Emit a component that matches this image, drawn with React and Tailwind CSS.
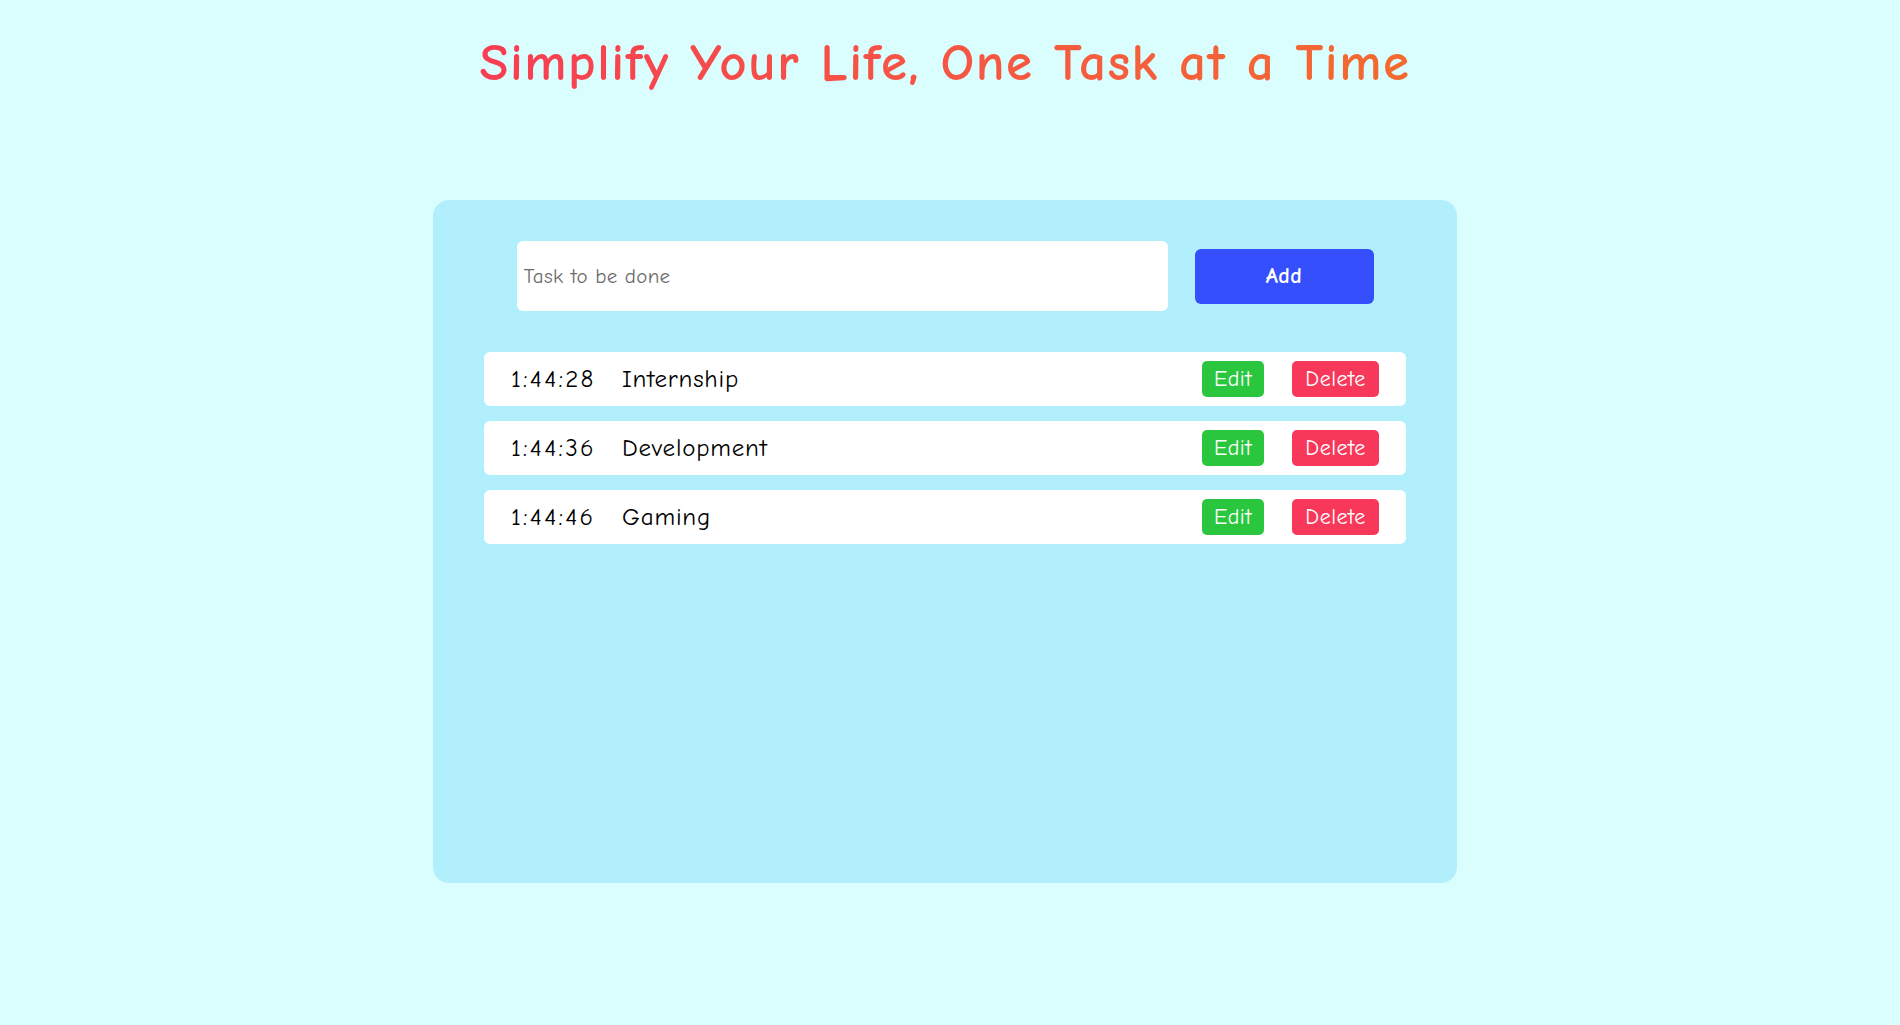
import { useState } from "react";

const FONT = "font-['Comic_Sans_MS','Comic_Neue','DejaVu_Sans',sans-serif]";

const INITIAL_TASKS = [
  { time: "1:44:28", text: "Internship" },
  { time: "1:44:36", text: "Development" },
  { time: "1:44:46", text: "Gaming" },
];

export default function App() {
  const [tasks, setTasks] = useState(INITIAL_TASKS);
  const [value, setValue] = useState("");

  function addTask() {
    if (!value.trim()) return;
    setTasks([...tasks, { time: new Date().toLocaleTimeString(), text: value }]);
    setValue("");
  }

  return (
    <div className={`min-h-screen bg-[#dafdfe] pr-[10px] ${FONT}`}>
      <h1 className="pt-[30px] text-center text-[53px] font-bold leading-[66px] tracking-[1.5px]">
        <span className="bg-gradient-to-r from-[#f73d52] to-[#f36a2e] bg-clip-text text-transparent">
          Simplify Your Life, One Task at a Time
        </span>
      </h1>

      <div className="mx-auto mt-[104px] h-[683px] w-[1024px] rounded-2xl bg-[#b1effd] px-[51px] pt-[41px]">
        <div className="flex items-center justify-center gap-[27px]">
          <input
            value={value}
            onChange={(e) => setValue(e.target.value)}
            placeholder="Task to be done"
            className="h-[70px] w-[651px] rounded-md bg-white px-[7px] text-[21px] tracking-[0.3px] text-black outline-none placeholder:text-[#6b6b6b]"
          />
          <button
            onClick={addTask}
            className="h-[55px] w-[179px] rounded-md bg-[#364ffc] text-[22px] font-bold tracking-[0.5px] text-white"
          >
            Add
          </button>
        </div>

        <ul className="mt-[41px] flex flex-col gap-[15px]">
          {tasks.map((t, i) => (
            <li
              key={i}
              className="flex h-[54px] items-center rounded-md bg-white pl-[27px] pr-[27px] text-[25px] text-black"
            >
              <span className="w-[111px] tracking-[2.2px]">{t.time}</span>
              <span className="flex-1 tracking-[0.8px]">{t.text}</span>
              <button className="h-[36px] w-[62px] rounded-[5px] bg-[#2ac73e] text-[22px] tracking-[0.5px] text-white">
                Edit
              </button>
              <button
                onClick={() => setTasks(tasks.filter((_, j) => j !== i))}
                className="ml-[28px] h-[36px] w-[87px] rounded-[5px] bg-[#f7385a] text-[22px] tracking-[0.5px] text-white"
              >
                Delete
              </button>
            </li>
          ))}
        </ul>
      </div>
    </div>
  );
}
